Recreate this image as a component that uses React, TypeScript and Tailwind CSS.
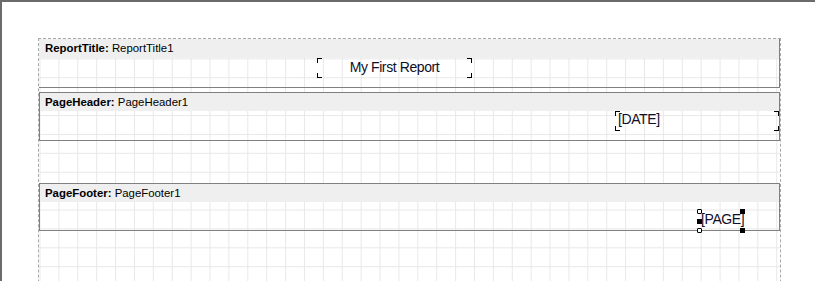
const font = "font-['Liberation_Sans',Arial,sans-serif]"

function Corners() {
  return (
    <>
      <span className="absolute left-0 top-0 w-[5px] h-[5px] border-l border-t border-black" />
      <span className="absolute right-0 top-0 w-[5px] h-[5px] border-r border-t border-black" />
      <span className="absolute left-0 bottom-0 w-[5px] h-[5px] border-l border-b border-black" />
      <span className="absolute right-0 bottom-0 w-[5px] h-[5px] border-r border-b border-black" />
    </>
  )
}

function BandHeader({ kind, name, first }: { kind: string; name: string; first?: boolean }) {
  return (
    <div
      className={
        first
          ? 'h-[19px] leading-[19px] bg-[#efefef] pl-[6px] text-[11.4px] text-black'
          : 'h-[18px] leading-[18px] bg-[#efefef] pl-[5px] text-[11.4px] text-black'
      }
    >
      <span className="font-bold">{kind}:</span> {name}
    </div>
  )
}

export default function App() {
  return (
    <div className={`w-[815px] h-[281px] overflow-hidden bg-white border-t-2 border-l-2 border-[#6b6b6b] pt-[36px] pl-[36px] ${font}`}>
      <div className="flex flex-col w-[743px] h-[300px] border border-dashed border-[#a8a8a8] bg-[linear-gradient(to_right,#e8e8e8_1px,transparent_1px),linear-gradient(to_bottom,#e8e8e8_1px,transparent_1px)] bg-[size:18.9px_18.9px] bg-[position:0.5px_0.5px]">
        {/* ReportTitle */}
        <div className="border-r border-b border-[#808080]">
          <BandHeader kind="ReportTitle" name="ReportTitle1" first />
          <div className="relative h-[29px]">
            <div className="absolute left-[278px] top-0 w-[155px] h-[20px] pt-[1px] text-center text-[14px] leading-[16px] tracking-[-0.4px] text-[#10102a]">
              My First Report
              <Corners />
            </div>
          </div>
        </div>

        {/* PageHeader */}
        <div className="mt-[4px] border border-[#808080]">
          <BandHeader kind="PageHeader" name="PageHeader1" />
          <div className="relative h-[29px]">
            <div className="absolute left-[575px] top-0 w-[164px] h-[20px] pl-[3px] text-[14px] leading-[16px] tracking-[-0.4px] text-[#10102a]">
              [DATE]
              <Corners />
            </div>
          </div>
        </div>

        {/* PageFooter */}
        <div className="mt-[42px] border border-[#808080]">
          <BandHeader kind="PageFooter" name="PageFooter1" />
          <div className="relative h-[28px]">
            <div className="absolute left-[659px] top-[9px] w-[44px] h-[19px] pl-[2px] text-[14px] leading-[16px] tracking-[-0.4px] text-[#10102a]">
              [PAGE]
              <span className="absolute left-[-2px] top-[-2px] w-[5px] h-[5px] border border-black bg-white rounded-[1px]" />
              <span className="absolute left-[-2px] top-[8px] w-[5px] h-[5px] bg-black" />
              <span className="absolute left-[-2px] bottom-[-3px] w-[5px] h-[5px] border border-black bg-white rounded-[1px]" />
              <span className="absolute right-[-2px] top-[-2px] w-[5px] h-[5px] bg-black" />
              <span className="absolute right-[-2px] bottom-[-3px] w-[5px] h-[5px] bg-black" />
            </div>
          </div>
        </div>
      </div>
    </div>
  )
}
